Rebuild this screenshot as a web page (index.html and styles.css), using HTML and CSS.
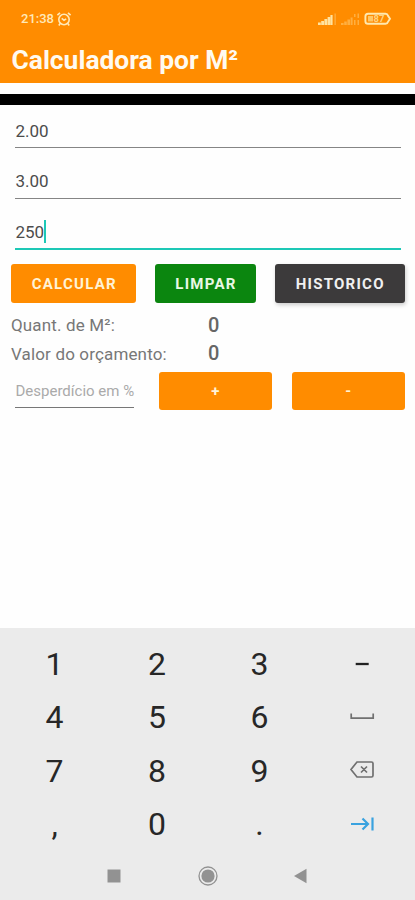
FILE: index.html
```html
<!DOCTYPE html>
<html lang="pt-BR">
<head>
<meta charset="utf-8">
<title>Calculadora por M²</title>
<link rel="stylesheet" href="styles.css">
</head>
<body>
<header class="header">
  <div class="status">
    <span class="clock">21:38</span>
    <svg class="alarm" viewBox="0 0 16 16" width="16" height="16"><circle cx="8" cy="8.5" r="5.2"/><path d="M1.4 4.2 4 1.8M14.6 4.2 12 1.8M4.2 12.6l-1.4 1.8M11.8 12.6l1.4 1.8M5.7 7.4 8 9.2l2.2-1.4"/></svg>
    <svg class="signals" viewBox="0 0 74 14" width="74" height="14">
      <g class="bars"><path d="M0 10.500h2.800V13H0zM3.200 9h2.800v4H3.200zM6.400 7h2.800v6H6.400zM9.600 5h2.600v8H9.600zM12.400 3h2.200v10h-2.200z"/><path class="faint" d="M16.500 1.500h1.300V13h-1.300zM23 11h2.600v2H23zM26.200 9.500h2.600V13h-2.600zM29.400 7.500H32V13h-2.600zM32.600 5.500h2V13h-2zM36 8h1.500v5H36zM39.500 8H41v5h-1.500zM36 2h1.500v3H36zM39.500 1.500H41V6h-1.500z"/></g>
      <path class="shell" d="M50 1.800h17.500q2 0 2.500 2l2 3-2 3q-.5 2-2.500 2H50q-2.600 0-2.600-2.600V4.400Q47.400 1.800 50 1.800z"/>
      <path class="charge" d="M50 4h5v5.500h-5z"/>
      <text x="55.500" y="10.200">87</text>
    </svg>
  </div>
  <h1 class="title">Calculadora por M²</h1>
</header>
<div class="banner"></div>
<main class="content">
  <div class="field">2.00</div>
  <div class="field">3.00</div>
  <div class="field active">250<i class="caret"></i></div>
  <div class="actions">
    <button class="btn">CALCULAR</button>
    <button class="btn green">LIMPAR</button>
    <button class="btn dark">HISTORICO</button>
  </div>
  <div class="result"><span class="name">Quant. de M²:</span><span class="value">0</span></div>
  <div class="result"><span class="name">Valor do orçamento:</span><span class="value">0</span></div>
  <div class="waste">
    <div class="hint">Desperdício em %</div>
    <button class="btn">+</button>
    <button class="btn">-</button>
  </div>
</main>
<footer class="keyboard">
  <div class="keys">
    <span>1</span><span>2</span><span>3</span><span><svg viewBox="0 0 26 22" width="26" height="22"><path class="minus" d="M6.700 11h13"/></svg></span>
    <span>4</span><span>5</span><span>6</span><span><svg viewBox="0 0 26 22" width="26" height="22"><path class="ink" d="M2.200 7.500v4.700h22V7.500"/></svg></span>
    <span>7</span><span>8</span><span>9</span><span><svg viewBox="0 0 26 22" width="26" height="22"><path class="ink" d="M8 2h14.500q1.500 0 1.500 1.500v12q0 1.500-1.500 1.500H8L2 9.500zM12 6.500l6 6M18 6.500l-6 6"/></svg></span>
    <span>,</span><span>0</span><span>.</span><span><svg viewBox="0 0 26 22" width="26" height="22"><path class="next" d="M2 11h16M13.500 5.500 19 11l-5.500 5.500M23.500 4.500v13"/></svg></span>
  </div>
  <nav class="nav">
    <svg viewBox="0 0 24 24" width="24" height="24"><path d="M5.500 5.500h13v13h-13z"/></svg>
    <svg viewBox="0 0 24 24" width="24" height="24"><circle cx="12" cy="12" r="6.600"/><circle class="ring" cx="12" cy="12" r="9"/></svg>
    <svg viewBox="0 0 24 24" width="24" height="24"><path d="M5 12 17.500 4.700v14.600z"/></svg>
  </nav>
</footer>
</body>
</html>
```
FILE: styles.css
```css
* { box-sizing: border-box; }
body {
  margin: 0;
  height: 900px;
  display: flex;
  flex-direction: column;
  overflow: hidden;
  background: #fefefe;
  font-family: Roboto, sans-serif;
  color: #4c4c4c;
}
.header { height: 83px; background: #ff8c00; color: #fffaf0; }
.status { height: 37px; padding: 0 23px 0 21px; display: flex; align-items: center; }
.clock { font-size: 13px; font-weight: 500; color: #ffe9b8; }
.alarm { margin-left: 2px; fill: none; stroke: #ffe9b8; stroke-width: 1.6; }
.signals { margin-left: auto; }
.bars { fill: #ffe3a0; }
.faint { opacity: .4; }
.shell { fill: none; stroke: #ffe9b0; stroke-width: 1.9; }
.charge { fill: #ffc766; }
.signals text { font-size: 9.5px; font-weight: 700; fill: #ffd382; }
.title { margin: 7px 0 0 11.500px; font-size: 26.400px; line-height: 32px; font-weight: 700; }
.banner { height: 11px; margin-top: 10.500px; background: #000; }
.content { flex: 1; padding: 0 10.500px 0 11px; }
.field {
  height: 50.800px;
  margin: 0 4px;
  padding: 23px 0 0 .5px;
  border-bottom: 1px solid #858585;
  font-size: 17px;
  line-height: 20px;
  display: flex;
}
.field:first-child { height: 43.500px; padding-top: 16.500px; }
.field.active { border-bottom: 2px solid #1dc8b6; height: 51.500px; }
.caret { width: 2px; height: 23px; margin-top: -2px; background: #1dc8b6; }
.actions { display: grid; grid-template-columns: 125px 101.500px 130px; justify-content: space-between; margin-top: 14px; }
.btn {
  height: 38.500px;
  padding: 0 0 0 1.500px;
  border: 0;
  border-radius: 3px;
  background: #ff8c00;
  color: #fff3d6;
  font: 700 15px Roboto, sans-serif;
  letter-spacing: 1.250px;
}
.green { background: #0b860f; color: #e9f8e4; }
.dark { background: #3c3a3b; color: #f0f0f0; box-shadow: 1px 2px 4px rgba(0,0,0,.2); }
.result { height: 28.300px; display: flex; align-items: center; color: #777; }
.actions + .result { margin-top: 8.500px; }
.name { width: 197px; font-size: 17px; letter-spacing: .15px; }
.value { font-size: 20px; font-weight: 500; color: #666; margin-top: -1.500px; }
.waste { display: grid; grid-template-columns: 119px 112.500px 113px; justify-content: space-between; margin: 4px 0 0 4px; }
.waste .btn:nth-child(2) { margin-left: 2.500px; margin-right: -2.500px; }
.hint { height: 36.500px; padding: 9px 0 0 .5px; border-bottom: 1px solid #777; font-size: 15px; line-height: 20px; color: #aaa; white-space: nowrap; }
.keyboard { height: 272.500px; background: #ebebeb; padding-top: 9.500px; }
.keys { display: grid; grid-template-columns: repeat(4, 102.500px); grid-auto-rows: 53.500px; margin-left: 3.300px; font-size: 32px; color: #272727; }
.keys span { display: flex; align-items: center; justify-content: center; }
.keys svg { fill: none; }
.minus { stroke: #222; stroke-width: 2.3; }
.ink { stroke: #707070; stroke-width: 1.7; }
.next { stroke: #39a2df; stroke-width: 2.2; }
.nav { display: flex; justify-content: space-between; margin: 12.500px 102px 0; fill: #929292; }
.ring { fill: none; stroke: #929292; stroke-width: 1.3; }
```
